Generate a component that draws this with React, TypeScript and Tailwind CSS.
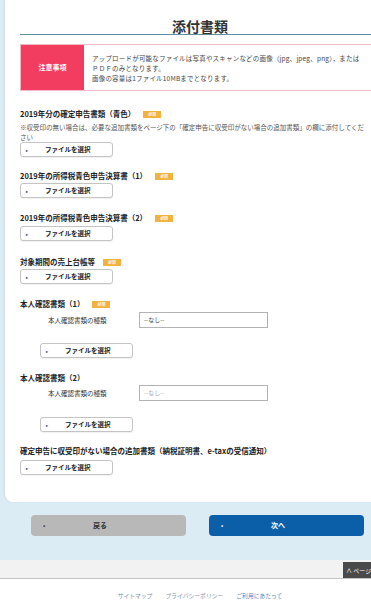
import React from "react";

function Badge() {
  return (
    <span className="ml-[8px] inline-flex h-[7px] w-[18px] items-center justify-center bg-[#f1b23f] text-[4px] leading-none text-white">
      必須
    </span>
  );
}

function SectionTitle({ children, required }: { children: React.ReactNode; required?: boolean }) {
  return (
    <div className="flex h-[10px] items-center text-[7.5px] font-bold leading-[10px] text-[#222]">
      <span>{children}</span>
      {required && <Badge />}
    </div>
  );
}

function FileButton({ className = "" }: { className?: string }) {
  return (
    <button
      className={`flex h-[15px] w-[93px] items-center rounded-[3px] border border-[#c4c4c4] bg-white pl-[5px] text-[6.5px] font-bold leading-none text-[#222] shadow-[0_1px_1px_rgba(0,0,0,0.06)] ${className}`}
    >
      <span className="w-[19px] text-left text-[4px] text-[#3a4a66]">▸</span>
      <span>ファイルを選択</span>
    </button>
  );
}

function SelectRow({ light, className = "" }: { light?: boolean; className?: string }) {
  return (
    <div className={`flex items-center pl-[28px] ${className}`}>
      <span className="w-[91px] text-[6.5px] leading-none text-[#333]">本人確認書類の種類</span>
      <div className="flex h-[16px] w-[129px] items-center border-[1.5px] border-[#b3b3b3] bg-white pl-[4px]">
        <span className={`text-[6px] leading-none ${light ? "text-[#aaa]" : "text-[#444]"}`}>--なし--</span>
      </div>
    </div>
  );
}

export default function App() {
  return (
    <div className="w-[371px] overflow-hidden bg-[#dcecf5] font-['Noto_Sans_CJK_JP','Noto_Sans',sans-serif]">
      <div className="w-[400px]">
        {/* main card */}
        <div className="ml-[5px] w-[395px] rounded-bl-[8px] bg-white pb-[27px] pl-[15px] pr-[20px] pt-[18px] shadow-[-1px_0_2px_rgba(120,150,170,0.15)]">
          <h1 className="border-b-[1.5px] border-[#5f929f] text-center text-[14px] font-bold leading-[16px] text-[#333]">
            添付書類
          </h1>

          {/* notice */}
          <div className="mt-[9px] flex h-[47px] border border-[#f2b9c6]">
            <div className="flex w-[63px] items-center justify-center bg-[#f23d60] text-[7px] font-bold text-white">
              注意事項
            </div>
            <div className="flex items-center pl-[8px] text-[6.5px] leading-[10px] tracking-[0.2px] text-[#444]">
              <p>
                アップロードが可能なファイルは写真やスキャンなどの画像（jpg、jpeg、png），または
                <br />
                ＰＤＦのみとなります。
                <br />
                画像の容量は1ファイル10MBまでとなります。
              </p>
            </div>
          </div>

          {/* section 1 */}
          <div className="mt-[18px]">
            <SectionTitle required>2019年分の確定申告書類（青色）</SectionTitle>
            <p className="mt-[3px] text-[6.5px] leading-[10px] text-[#555]">
              ※収受印の無い場合は、必要な追加書類をページ下の「確定申告に収受印がない場合の追加書類」の欄に添付してくだ
              <br />
              さい
            </p>
            <FileButton />
          </div>

          <div className="mt-[14px]">
            <SectionTitle required>2019年の所得税青色申告決算書（1）</SectionTitle>
            <FileButton className="mt-[2px]" />
          </div>

          <div className="mt-[15px]">
            <SectionTitle required>2019年の所得税青色申告決算書（2）</SectionTitle>
            <FileButton className="mt-[3px]" />
          </div>

          <div className="mt-[16px]">
            <SectionTitle required>対象期間の売上台帳等</SectionTitle>
            <FileButton className="mt-[2px]" />
          </div>

          <div className="mt-[15px]">
            <SectionTitle required>本人確認書類（1）</SectionTitle>
            <SelectRow className="mt-[3px]" />
            <FileButton className="ml-[20px] mt-[15px]" />
          </div>

          <div className="mt-[15px]">
            <SectionTitle>本人確認書類（2）</SectionTitle>
            <SelectRow light className="mt-[2px]" />
            <FileButton className="ml-[20px] mt-[16px]" />
          </div>

          <div className="mt-[14px]">
            <SectionTitle>確定申告に収受印がない場合の追加書類（納税証明書、e-taxの受信通知）</SectionTitle>
            <FileButton className="mt-[4px]" />
          </div>
        </div>

        {/* navigation buttons */}
        <div className="flex gap-[23px] pb-[24px] pl-[31px] pt-[13px]">
          <button className="flex h-[21px] w-[155px] items-center rounded-[4px] bg-[#b8b8b8] text-[7px] font-bold text-[#333]">
            <span className="w-[60px] pl-[12px] text-left text-[6px]">•</span>
            <span className="ml-[2px]">戻る</span>
          </button>
          <button className="flex h-[21px] w-[155px] items-center rounded-[4px] bg-[#0b5fa9] text-[7px] font-bold text-white">
            <span className="w-[60px] pl-[12px] text-left text-[6px]">•</span>
            <span className="ml-[2px]">次へ</span>
          </button>
        </div>
      </div>

      {/* gray strip with page-top */}
      <div className="flex h-[19px] items-end justify-end border-b border-[#c4c4c4] bg-[#f2f2f2]">
        <div className="flex h-[16px] w-[28px] items-center overflow-hidden whitespace-nowrap bg-[#4a4a4a] pl-[3px] text-[6px] text-white">
          ∧ ページトップへ
        </div>
      </div>

      {/* footer */}
      <div className="w-[400px] bg-white">
        <div className="flex h-[40px] justify-center gap-[13px] pt-[14px] text-[5.8px] leading-none">
          <span className="text-[#7d93ad]">サイトマップ</span>
          <span className="text-[#7d93ad]">プライバシーポリシー</span>
          <span className="text-[#5a86bf]">ご利用にあたって</span>
        </div>
      </div>
    </div>
  );
}
